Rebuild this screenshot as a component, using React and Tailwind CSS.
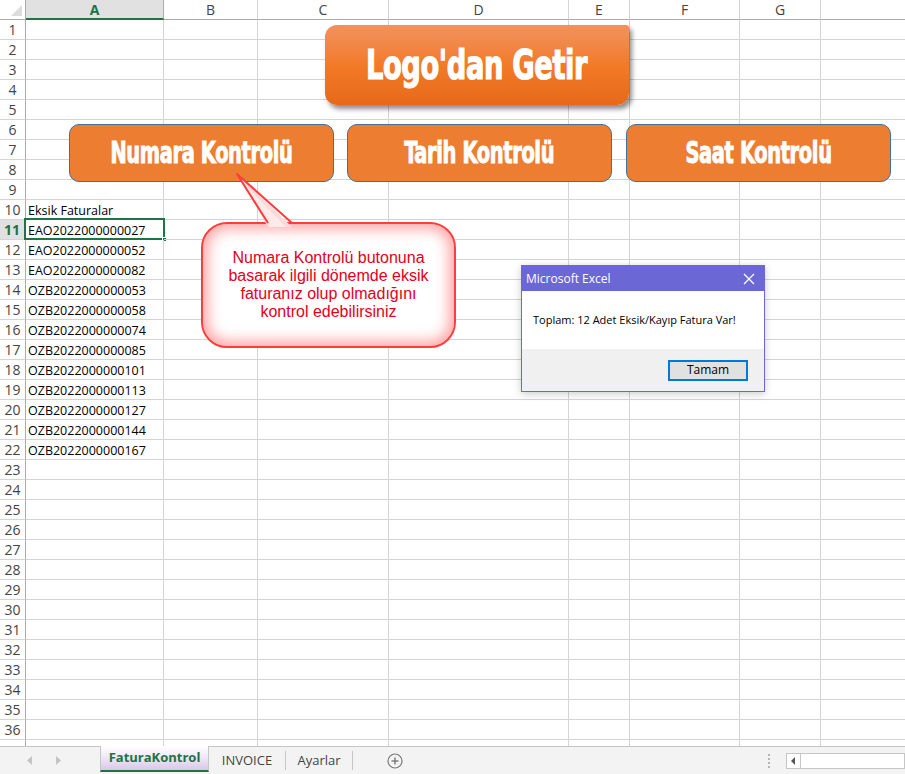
import React from "react";

const COLS = [
  { label: "A", w: "w-[138px]" },
  { label: "B", w: "w-[94px]" },
  { label: "C", w: "w-[131px]" },
  { label: "D", w: "w-[180px]" },
  { label: "E", w: "w-[61px]" },
  { label: "F", w: "w-[110px]" },
  { label: "G", w: "w-[81px]" },
];

const CELLS = {
  10: "Eksik Faturalar",
  11: "EAO2022000000027",
  12: "EAO2022000000052",
  13: "EAO2022000000082",
  14: "OZB2022000000053",
  15: "OZB2022000000058",
  16: "OZB2022000000074",
  17: "OZB2022000000085",
  18: "OZB2022000000101",
  19: "OZB2022000000113",
  20: "OZB2022000000127",
  21: "OZB2022000000144",
  22: "OZB2022000000167",
};

// 36 numbered rows plus a partly hidden one under the sheet tabs
const ROWS = Array.from({ length: 37 }, (_, i) => i + 1);

function HeaderRow() {
  return (
    <div className="flex h-[20px] shrink-0">
      <div className="relative w-[26px] h-full border-r border-b border-[#ababab] bg-white">
        <svg className="absolute left-[10px] top-[4px]" width="13" height="13" viewBox="0 0 13 13">
          <polygon points="12,1 12,12 1,12" fill="#dcdcdc" />
        </svg>
      </div>
      {COLS.map((c) =>
        c.label === "A" ? (
          <div
            key={c.label}
            className={`${c.w} h-full flex items-center justify-center bg-[#e1e1e1] border-r border-[#ababab] border-b-2 border-b-[#217346] text-[14px] font-bold text-[#217346]`}
          >
            {c.label}
          </div>
        ) : (
          <div
            key={c.label}
            className={`${c.w} h-full flex items-center justify-center bg-white border-r border-b border-r-[#d4d4d4] border-b-[#ababab] text-[14px] text-[#444]`}
          >
            {c.label}
          </div>
        )
      )}
      <div className="flex-1 h-full bg-white border-b border-[#ababab]" />
    </div>
  );
}

function Row({ n }) {
  const active = n === 11;
  return (
    <div className="flex h-[20px] shrink-0">
      <div
        className={
          active
            ? "w-[26px] h-full flex items-center justify-center bg-[#e1e1e1] border-r-2 border-r-[#217346] border-b border-b-[#d4d4d4] text-[14px] font-bold text-[#217346]"
            : "w-[26px] h-full flex items-center justify-center bg-white border-r border-r-[#ababab] border-b border-b-[#d4d4d4] text-[14px] text-[#444]"
        }
      >
        {n <= 36 ? n : ""}
      </div>
      {COLS.map((c, i) => (
        <div
          key={c.label}
          className={`${c.w} h-full relative border-r border-b border-[#d4d4d4] flex items-center`}
        >
          {i === 0 && CELLS[n] && (
            <span className="pl-[2px] pt-[3px] text-[12.5px] text-black whitespace-nowrap leading-none">
              {CELLS[n]}
            </span>
          )}
          {i === 0 && active && (
            <div className="absolute -left-[2px] -top-[2px] w-[141px] h-[22px] border-2 border-[#217346]">
              <div className="absolute -right-[4px] -bottom-[4px] w-[5px] h-[5px] bg-[#217346] border border-white" />
            </div>
          )}
        </div>
      ))}
      <div className="flex-1 h-full border-b border-[#d4d4d4]" />
    </div>
  );
}

function ActionButton({ left, label }) {
  return (
    <div
      className={`absolute ${left} top-[124px] w-[265px] h-[58px] rounded-[10px] bg-[#ed7d31] border border-[#41719c] flex items-center justify-center`}
    >
      <span className="inline-block text-white text-[30px] font-bold leading-none whitespace-nowrap scale-x-[0.72] [-webkit-text-stroke:1px_white] [font-family:'DejaVu_Sans_Condensed','DejaVu_Sans',sans-serif] tracking-[-0.5px]">
        {label}
      </span>
    </div>
  );
}

function SheetTabs() {
  return (
    <div className="h-[28px] shrink-0 bg-[#f3f3f3] border-t border-[#c6c6c6] flex items-stretch relative">
      <div className="w-[100px] flex items-center">
        <svg className="ml-[27px]" width="6" height="9" viewBox="0 0 6 9">
          <polygon points="5,0 5,9 0,4.5" fill="#c4c4c4" />
        </svg>
        <svg className="ml-[22px]" width="6" height="9" viewBox="0 0 6 9">
          <polygon points="1,0 1,9 6,4.5" fill="#c4c4c4" />
        </svg>
      </div>
      <div className="-mt-px w-[109px] h-[26px] flex items-center justify-center border-x border-[#c6c6c6] bg-gradient-to-b from-white via-[#efe6f6] to-[#d9c6ea] border-b-2 border-b-[#217346]">
        <span className="text-[13px] font-bold text-[#217346]">FaturaKontrol</span>
      </div>
      <div className="w-[76px] flex items-center justify-center text-[13px] text-[#444]">INVOICE</div>
      <div className="w-px my-[4px] bg-[#c6c6c6]" />
      <div className="w-[66px] flex items-center justify-center text-[13px] text-[#444]">Ayarlar</div>
      <div className="w-px my-[4px] bg-[#c6c6c6]" />
      <div className="w-[83px] flex items-center justify-center">
        <svg width="16" height="16" viewBox="0 0 16 16">
          <circle cx="8" cy="8" r="7" fill="none" stroke="#777" strokeWidth="1.2" />
          <line x1="8" y1="4.5" x2="8" y2="11.5" stroke="#777" strokeWidth="1.4" />
          <line x1="4.5" y1="8" x2="11.5" y2="8" stroke="#777" strokeWidth="1.4" />
        </svg>
      </div>
      <div className="flex-1" />
      <div className="w-[3px] flex flex-col justify-center gap-[2px] mr-[15px]">
        <div className="w-[2px] h-[2px] bg-[#b5b5b5]" />
        <div className="w-[2px] h-[2px] bg-[#b5b5b5]" />
        <div className="w-[2px] h-[2px] bg-[#b5b5b5]" />
        <div className="w-[2px] h-[2px] bg-[#b5b5b5]" />
      </div>
      <div className="w-[119px] flex items-center">
        <div className="h-[16px] w-full flex border border-[#c6c6c6] bg-white">
          <div className="w-[14px] h-full border-r border-[#c6c6c6] flex items-center justify-center">
            <svg width="5" height="8" viewBox="0 0 5 8">
              <polygon points="4,0 4,8 0,4" fill="#555" />
            </svg>
          </div>
        </div>
      </div>
    </div>
  );
}

export default function App() {
  return (
    <div className="w-[905px] h-[774px] overflow-hidden bg-white flex flex-col [font-family:'Open_Sans','Noto_Sans',sans-serif]">
      <div className="relative h-[746px] shrink-0 overflow-hidden flex flex-col">
        <HeaderRow />
        {ROWS.map((n) => (
          <Row key={n} n={n} />
        ))}

        {/* Logo button */}
        <div className="absolute left-[325px] top-[25px] w-[304px] h-[80px] rounded-tl-[12px] rounded-tr-[3px] rounded-b-[12px] bg-gradient-to-b from-[#f1925e] via-[#f37a26] to-[#e6691a] shadow-[3px_4px_5px_rgba(0,0,0,0.45)] flex items-center justify-center">
          <span className="inline-block text-white text-[41px] font-bold leading-none whitespace-nowrap scale-x-[0.74] [-webkit-text-stroke:1.2px_white] [font-family:'DejaVu_Sans_Condensed','DejaVu_Sans',sans-serif] tracking-[-0.5px]">
            Logo'dan Getir
          </span>
        </div>

        <ActionButton left="left-[69px]" label="Numara Kontrolü" />
        <ActionButton left="left-[347px]" label="Tarih Kontrolü" />
        <ActionButton left="left-[626px]" label="Saat Kontrolü" />

        {/* Callout */}
        <div className="absolute left-[201px] top-[222px] w-[255px] h-[126px] rounded-[26px] border-2 border-[#ff3d3d] bg-white shadow-[inset_0_0_14px_5px_rgba(255,90,90,0.55)] flex items-center justify-center">
          <p className="text-center text-[16px] leading-[18px] text-[#e4001b] [font-family:'Liberation_Sans',Arial,sans-serif]">
            Numara Kontrolü butonuna
            <br />
            basarak ilgili dönemde eksik
            <br />
            faturanız olup olmadığını
            <br />
            kontrol edebilirsiniz
          </p>
        </div>
        <svg className="absolute left-[230px] top-[170px]" width="70" height="60" viewBox="0 0 70 60">
          <polygon points="7,4 38,57 62,57" fill="#ffd9d9" />
          <polygon points="14,14 40,57 56,57" fill="#ffeaea" />
          <polyline points="38,53 7,4 62,53" fill="none" stroke="#ff3d3d" strokeWidth="2" strokeLinejoin="round" />
        </svg>

        {/* Message box */}
        <div className="absolute left-[521px] top-[265px] w-[244px] h-[127px] border border-[#6b68d6] bg-[#f0f0f0] flex flex-col shadow-[0_2px_8px_rgba(0,0,0,0.2)]">
          <div className="h-[25px] bg-[#6b68d6] flex items-center justify-between px-[4px]">
            <span className="text-white text-[12px]">Microsoft Excel</span>
            <svg className="mr-[5px]" width="12" height="12" viewBox="0 0 12 12">
              <line x1="1" y1="1" x2="11" y2="11" stroke="white" strokeWidth="1.2" />
              <line x1="11" y1="1" x2="1" y2="11" stroke="white" strokeWidth="1.2" />
            </svg>
          </div>
          <div className="h-[58px] bg-white flex items-center pl-[11px]">
            <span className="text-[11px] text-black">Toplam: 12 Adet Eksik/Kayıp Fatura Var!</span>
          </div>
          <div className="flex-1 flex items-center justify-end pr-[16px]">
            <div className="w-[80px] h-[21px] bg-[#e1e1e1] border-2 border-[#0078d7] flex items-center justify-center text-[12px] text-black">
              Tamam
            </div>
          </div>
        </div>
      </div>
      <SheetTabs />
    </div>
  );
}
